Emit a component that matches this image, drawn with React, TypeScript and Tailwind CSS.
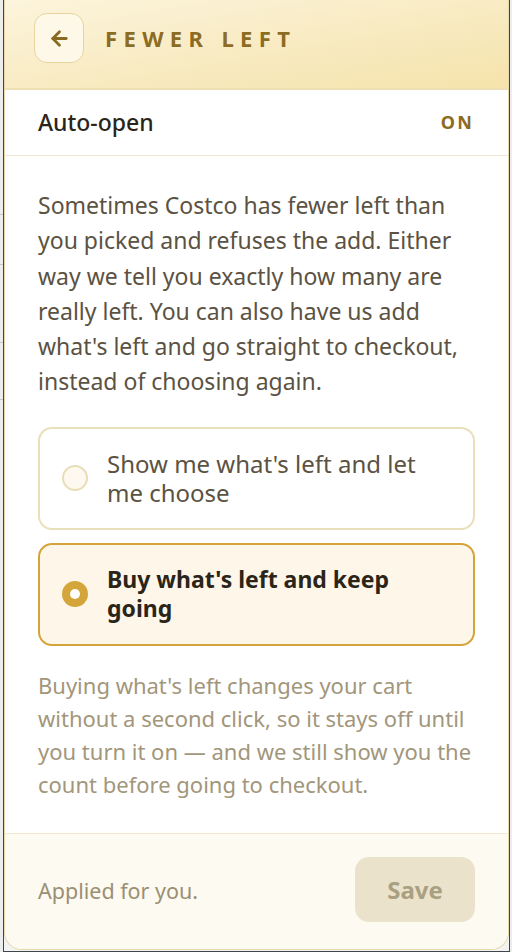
import React from "react";

const font = { fontFamily: "'Noto Sans', 'Open Sans', sans-serif" };

function ArrowLeft() {
  return (
    <svg width="23" height="23" viewBox="0 0 24 24" fill="none" stroke="#8a6a1e" strokeWidth="2.9" strokeLinecap="round" strokeLinejoin="round">
      <path d="M19 12H5" />
      <path d="M12 19l-7-7 7-7" />
    </svg>
  );
}

export default function App() {
  return (
    <div className="relative flex h-[952px] w-[512px] overflow-hidden bg-[#ededed]" style={font}>
      <div className="flex w-[3px] flex-col">
        <div className="h-[215px] border-b border-[#c8c8c8]" />
        <div className="h-[50px] border-b border-[#c8c8c8]" />
        <div className="h-[78px] border-b border-[#c8c8c8]" />
        <div className="h-[57px] border-b border-[#c8c8c8]" />
      </div>
      <div className="flex h-[952px] w-[507px] flex-col border-x border-b border-[#3f4647] bg-[#f3f3f1]">
        <div className="flex h-[950px] flex-col overflow-hidden rounded-b-[18px] border-x border-b border-[#e6d8aa] bg-white">
          <div className="flex h-[90px] shrink-0 items-start gap-[21px] border-b-2 border-[#efe1b3] bg-gradient-to-br from-[#fcf4dc] to-[#f5e3ab] px-[29px] pt-[13px]">
            <div className="flex h-[50px] w-[50px] items-center justify-center rounded-[13px] border-[1.5px] border-[#e8d59d] bg-[#fdf8e8]">
              <ArrowLeft />
            </div>
            <div className="flex h-[50px] items-center text-[22px] font-bold uppercase tracking-[0.29em] text-[#8c6b22]">
              Fewer left
            </div>
          </div>
          <div className="flex h-[66px] shrink-0 items-center justify-between border-b border-[#f1e7d2] pl-[33px] pr-[34px]">
            <span className="text-[23px] font-medium text-[#2b2519]">Auto-open</span>
            <span className="text-[18px] font-bold tracking-[0.12em] text-[#8c6b22]">ON</span>
          </div>
          <div className="flex flex-1 flex-col px-[33px] pt-[32px]">
            <p className="text-[23px] leading-[35.3px] text-[#5b5242]">
              Sometimes Costco has fewer left than you picked and refuses the add. Either way we tell you exactly how many are really left. You can also have us add what's left and go straight to checkout, instead of choosing again.
            </p>
            <div className="mt-[27px] flex flex-col gap-[13px]">
              <div className="flex h-[103px] items-center gap-[19px] rounded-[14px] border-2 border-[#eadfbb] bg-white pl-[22px] pr-[28px]">
                <div className="h-[26px] w-[26px] shrink-0 rounded-full border-2 border-[#e9ddb8] bg-[#fdf9f0]" />
                <span className="text-[24px] leading-[29px] text-[#5b5242]">Show me what's left and let me choose</span>
              </div>
              <div className="flex h-[103px] items-center gap-[19px] rounded-[14px] border-2 border-[#d4a43a] bg-[#fef7e9] pl-[22px] pr-[28px]">
                <div className="flex h-[26px] w-[26px] shrink-0 items-center justify-center rounded-full bg-[#d4a53b]">
                  <div className="h-[10px] w-[10px] rounded-full bg-white" />
                </div>
                <span className="text-[23px] font-bold leading-[29px] text-[#2b2519]">Buy what's left and keep going</span>
              </div>
            </div>
            <p className="mt-[23px] text-[22px] leading-[33px] text-[#a2967b]">
              Buying what's left changes your cart without a second click, so it stays off until you turn it on — and we still show you the count before going to checkout.
            </p>
          </div>
          <div className="flex h-[116px] shrink-0 items-start justify-between border-t border-[#f3e7cd] bg-[#fdfaf2] pl-[33px] pr-[33px] pt-[23px]">
            <span className="mt-[18px] text-[21.5px] text-[#9b8f73]">Applied for you.</span>
            <div className="flex h-[65px] w-[120px] items-center justify-center rounded-[14px] bg-[#ebe2cb] text-[24px] font-bold text-[#a9a081]">
              Save
            </div>
          </div>
        </div>
      </div>
      <div className="w-[2px]" />
    </div>
  );
}
